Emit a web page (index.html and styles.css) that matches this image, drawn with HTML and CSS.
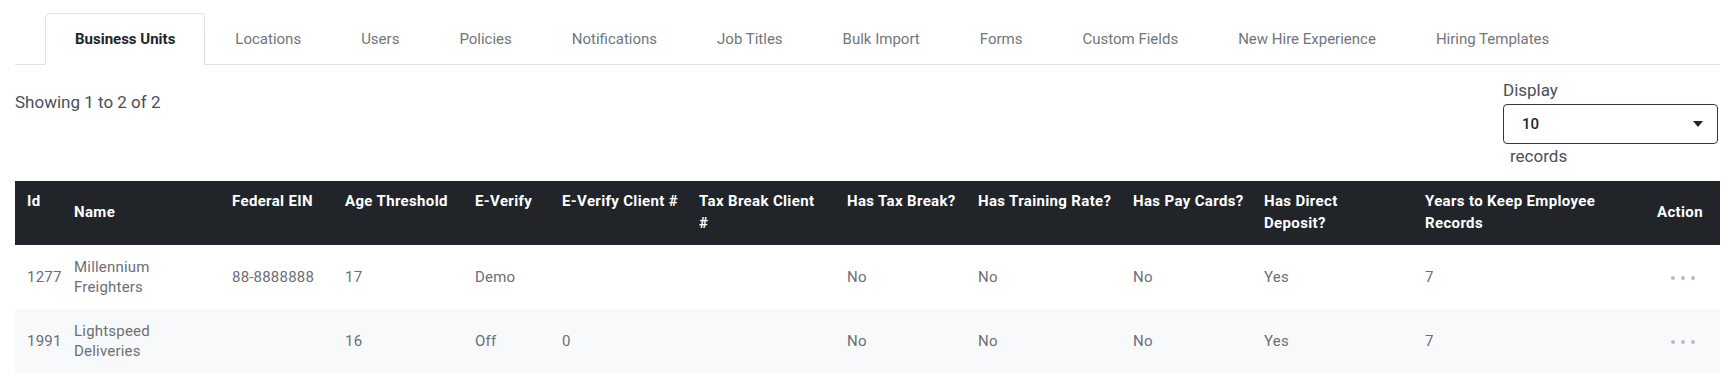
FILE: index.html
```html
<!DOCTYPE html>
<html lang="en">

<head>
    <meta charset="UTF-8">
    <meta name="viewport" content="width=device-width, initial-scale=1.0">
    <title>Business Units</title>
    <link rel="stylesheet" href="styles.css">
</head>

<body>
    <div class="page">
        <ul class="nav-tabs">
            <li><a href="#" class="active">Business Units</a></li>
            <li><a href="#">Locations</a></li>
            <li><a href="#">Users</a></li>
            <li><a href="#">Policies</a></li>
            <li><a href="#">Notifications</a></li>
            <li><a href="#">Job Titles</a></li>
            <li><a href="#">Bulk Import</a></li>
            <li><a href="#">Forms</a></li>
            <li><a href="#">Custom Fields</a></li>
            <li><a href="#">New Hire Experience</a></li>
            <li><a href="#">Hiring Templates</a></li>
        </ul>

        <div class="toolbar">
            <div class="info">Showing 1 to 2 of 2</div>
            <label class="length">
                <span class="length-label">Display</span>
                <span class="select-wrap">
                    <select>
                        <option selected>10</option>
                        <option>25</option>
                        <option>50</option>
                        <option>100</option>
                    </select>
                    <svg class="caret" width="10" height="6" viewBox="0 0 10 6"><path d="M0 0h10L5 6z" fill="#212529"/></svg>
                </span>
                <span class="length-suffix">records</span>
            </label>
        </div>

        <table class="grid">
            <thead>
                <tr>
                    <th class="col-id">Id</th>
                    <th class="col-name mid">Name</th>
                    <th class="col-ein">Federal EIN</th>
                    <th class="col-age">Age Threshold</th>
                    <th class="col-ev">E-Verify</th>
                    <th class="col-evc">E-Verify Client #</th>
                    <th class="col-tbc wrap">Tax Break Client #</th>
                    <th class="col-tb">Has Tax Break?</th>
                    <th class="col-tr">Has Training Rate?</th>
                    <th class="col-pc">Has Pay Cards?</th>
                    <th class="col-dd wrap">Has Direct Deposit?</th>
                    <th class="col-yrs wrap">Years to Keep Employee Records</th>
                    <th class="col-act mid">Action</th>
                </tr>
            </thead>
            <tbody>
                <tr>
                    <td>1277</td>
                    <td>Millennium Freighters</td>
                    <td>88-8888888</td>
                    <td>17</td>
                    <td>Demo</td>
                    <td></td>
                    <td></td>
                    <td>No</td>
                    <td>No</td>
                    <td>No</td>
                    <td>Yes</td>
                    <td>7</td>
                    <td class="action"><span class="dots"><i></i><i></i><i></i></span></td>
                </tr>
                <tr>
                    <td>1991</td>
                    <td>Lightspeed Deliveries</td>
                    <td></td>
                    <td>16</td>
                    <td>Off</td>
                    <td>0</td>
                    <td></td>
                    <td>No</td>
                    <td>No</td>
                    <td>No</td>
                    <td>Yes</td>
                    <td>7</td>
                    <td class="action"><span class="dots"><i></i><i></i><i></i></span></td>
                </tr>
            </tbody>
        </table>
    </div>
</body>

</html>
```

FILE: styles.css
```css
body {
    margin: 0;
    background: #fff;
    font-family: Roboto, "Liberation Sans", Arial, sans-serif;
    color: #495057;
}

.page {
    padding: 0 15px;
}

/* Tabs */
.nav-tabs {
    display: flex;
    margin: 13px 0 0;
    padding: 0 0 0 30px;
    list-style: none;
    border-bottom: 1px solid #dee2e6;
}

.nav-tabs a {
    display: block;
    margin-bottom: -1px;
    padding: 15px 29px;
    font-size: 15px;
    line-height: 20px;
    color: #6f767d;
    text-decoration: none;
    border: 1px solid transparent;
    border-radius: 5px 5px 0 0;
}

.nav-tabs a.active {
    color: #212529;
    font-weight: 700;
    background: #fff;
    border-color: #dee2e6 #dee2e6 #fff;
}

/* Info + page length */
.toolbar {
    display: flex;
    justify-content: space-between;
    align-items: flex-start;
    margin-top: 13px;
}

.info {
    padding-top: 12px;
    font-size: 17px;
    line-height: 24px;
    color: #495057;
}

.length {
    display: flex;
    flex-direction: column;
    width: 215px;
    margin-right: 2px;
    font-size: 17px;
    line-height: 24px;
    color: #495057;
}

.select-wrap {
    position: relative;
    display: block;
    margin-top: 2px;
}

.select-wrap select {
    display: block;
    width: 100%;
    height: 40px;
    padding: 0 30px 0 18px;
    font-family: inherit;
    font-size: 15px;
    font-weight: 500;
    color: #212529;
    background: #fff;
    border: 1px solid #343a40;
    border-radius: 4px;
    appearance: none;
    -webkit-appearance: none;
}

.caret {
    position: absolute;
    right: 15px;
    top: 17px;
    pointer-events: none;
}

.length-suffix {
    padding-left: 7px;
}

/* Table */
.grid {
    width: 100%;
    margin-top: 13px;
    border-collapse: collapse;
    table-layout: fixed;
}

.grid th,
.grid td {
    box-sizing: border-box;
}

.grid th {
    padding: 10px 12px 11px;
    font-size: 15px;
    font-weight: 700;
    line-height: 21.6px;
    letter-spacing: 0.35px;
    white-space: nowrap;
    color: #fff;
    text-align: left;
    vertical-align: top;
    background: #212529;
}

.grid th.wrap {
    white-space: normal;
}

.grid th.mid {
    vertical-align: middle;
}

.grid td {
    padding: 12px;
    font-size: 15px;
    line-height: 20px;
    letter-spacing: 0.2px;
    color: #6b7075;
    vertical-align: middle;
}

.grid tbody tr:nth-child(even) {
    background: #f8f9fa;
}

.col-id { width: 47px; }
.col-name { width: 158px; }
.col-ein { width: 113px; }
.col-age { width: 130px; }
.col-ev { width: 87px; }
.col-evc { width: 137px; }
.col-tbc { width: 148px; }
.col-tb { width: 131px; }
.col-tr { width: 155px; }
.col-pc { width: 131px; }
.col-dd { width: 161px; }
.col-yrs { width: 232px; }

.grid td.action {
    text-align: center;
}

.dots {
    display: inline-flex;
    gap: 6px;
    vertical-align: middle;
}

.dots i {
    width: 4px;
    height: 4px;
    border-radius: 50%;
    background: #b4bec6;
}
```
